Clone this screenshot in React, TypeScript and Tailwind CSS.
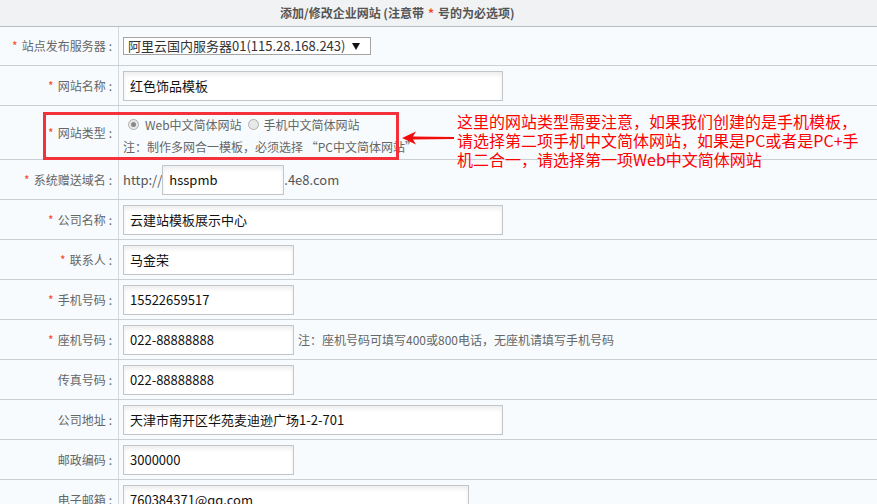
import React from "react";

const F = { fontFamily: '"Noto Sans CJK SC", "Liberation Sans", sans-serif' };

function Label({ text, req }: { text: string; req?: boolean }) {
  return (
    <div className="w-[119px] shrink-0 border-r border-[#d3d9dd] flex items-center justify-end pr-[6px] text-[12px] text-[#666]">
      {req && <span className="text-[#f04a2a] mr-[4px]">*</span>}
      <span>{text}</span>
      <span className="ml-[3px]">:</span>
    </div>
  );
}

function Input({ value, w }: { value: string; w: string }) {
  return (
    <div
      className={`${w} h-[30px] border border-[#c3c6c8] bg-white shadow-[inset_0_3px_4px_rgba(0,0,0,0.07)] flex items-center pl-[6px] text-[13px] text-[#111]`}
    >
      {value}
    </div>
  );
}

function Row({ label, req, children, h = "h-[40px]" }: { label: string; req?: boolean; children: React.ReactNode; h?: string }) {
  return (
    <div className={`flex ${h} border-b border-[#c9cfd3]`}>
      <Label text={label} req={req} />
      <div className="flex items-center pl-[4px] flex-1">{children}</div>
    </div>
  );
}

export default function App() {
  return (
    <div style={F} className="w-[877px] h-[504px] overflow-hidden bg-[#f7fbfd] relative">
      <div className="h-[27px] bg-[#f0f2f3] border-b border-[#b9bdbf] flex items-center pl-[280px] text-[12px] font-bold text-[#555]">
        添加/修改企业网站 (注意带 <span className="text-[#f04a2a] mx-[4px]">*</span> 号的为必选项)
      </div>
      <div className="flex h-[39px] border-b border-[#c9cfd3]">
        <Label text="站点发布服务器" req />
        <div className="flex items-center pl-[4px]">
          <div className="w-[248px] h-[18px] border border-[#a5a5a5] bg-white flex items-center justify-between pl-[4px] pr-[10px] text-[13px] text-[#333]">
            <span>阿里云国内服务器01(115.28.168.243)</span>
            <svg width="8" height="7" viewBox="0 0 8 7">
              <path d="M0 0 L8 0 L4 7 Z" fill="#111" />
            </svg>
          </div>
        </div>
      </div>
      <Row label="网站名称" req>
        <Input value="红色饰品模板" w="w-[380px]" />
      </Row>
      <div className="flex h-[54px] border-b border-[#c9cfd3]">
        <Label text="网站类型" req />
        <div className="flex flex-col justify-center pl-[4px] text-[12px] text-[#666] gap-[4px] pt-[6px]">
          <div className="flex items-center">
            <span className="w-[11px] h-[11px] rounded-full border border-[#b0b0b0] bg-[#e8e8e8] flex items-center justify-center ml-[5px] mr-[6px]">
              <span className="w-[5px] h-[5px] rounded-full bg-[#888]" />
            </span>
            <span>Web中文简体网站</span>
            <span className="w-[11px] h-[11px] rounded-full border border-[#b0b0b0] bg-[#e8e8e8] ml-[6px] mr-[5px]" />
            <span>手机中文简体网站</span>
          </div>
          <div>注：制作多网合一模板，必须选择 “PC中文简体网站”</div>
        </div>
      </div>
      <Row label="系统赠送域名" req>
        <span className="text-[13px] text-[#555]">http://</span>
        <Input value="hsspmb" w="w-[122px]" />
        <span className="text-[13px] text-[#555]">.4e8.com</span>
      </Row>
      <Row label="公司名称" req>
        <Input value="云建站模板展示中心" w="w-[380px]" />
      </Row>
      <Row label="联系人" req>
        <Input value="马金荣" w="w-[171px]" />
      </Row>
      <Row label="手机号码" req>
        <Input value="15522659517" w="w-[171px]" />
      </Row>
      <Row label="座机号码" req>
        <Input value="022-88888888" w="w-[171px]" />
        <span className="ml-[4px] text-[12px] text-[#666]">注：座机号码可填写400或800电话，无座机请填写手机号码</span>
      </Row>
      <Row label="传真号码">
        <Input value="022-88888888" w="w-[171px]" />
      </Row>
      <Row label="公司地址">
        <Input value="天津市南开区华苑麦迪逊广场1-2-701" w="w-[380px]" />
      </Row>
      <Row label="邮政编码">
        <Input value="3000000" w="w-[171px]" />
      </Row>
      <Row label="电子邮箱">
        <Input value="760384371@qq.com" w="w-[346px]" />
      </Row>

      <div className="absolute left-[43px] top-[112px] w-[356px] h-[48px] border-[3px] border-[#f4303a] pointer-events-none" />
      <svg className="absolute left-[402px] top-[131px]" width="52" height="14" viewBox="0 0 52 14">
        <path d="M0 7 L14 0.5 L11 5.5 L52 6 L52 8 L11 8.5 L14 13.5 Z" fill="#f20d0d" />
      </svg>
      <div className="absolute left-[457px] top-[112px] w-[410px] text-[16px] leading-[19px] text-[#ff0000]">
        这里的网站类型需要注意，如果我们创建的是手机模板，请选择第二项手机中文简体网站，如果是PC或者是PC+手机二合一，请选择第一项Web中文简体网站
      </div>
    </div>
  );
}
